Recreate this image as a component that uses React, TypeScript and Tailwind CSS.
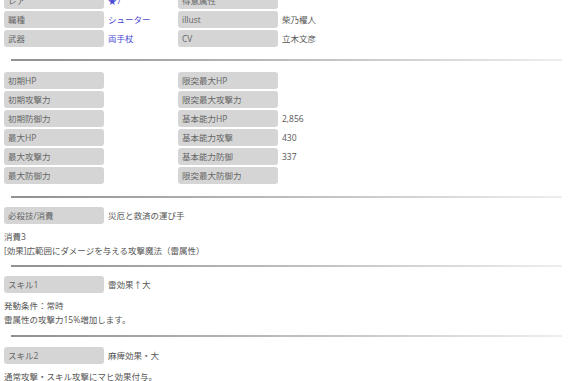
import React from "react";

const Label = ({ children }: { children: React.ReactNode }) => (
  <div className="h-[17px] rounded-[3px] bg-[#d5d5d5] pl-[4px] leading-[17px] text-[#666]">{children}</div>
);

const Val = ({ children, blue }: { children?: React.ReactNode; blue?: boolean }) => (
  <div className={`h-[17px] pl-[4px] leading-[17px] ${blue ? "text-[#4a4ad4]" : "text-[#555]"}`}>{children}</div>
);

const Divider = () => (
  <div className="ml-[11px] mr-[18px] h-[2px] bg-gradient-to-r from-[#909090] via-[#bdbdbd] to-[#eeeeee]" />
);

export default function App() {
  const stats: [string, string, string, string][] = [
    ["初期HP", "", "限突最大HP", ""],
    ["初期攻撃力", "", "限突最大攻撃力", ""],
    ["初期防御力", "", "基本能力HP", "2,856"],
    ["最大HP", "", "基本能力攻撃", "430"],
    ["最大攻撃力", "", "基本能力防御", "337"],
    ["最大防御力", "", "限突最大防御力", ""],
  ];
  return (
    <div
      className="h-[381px] w-[580px] overflow-hidden bg-white text-[8.5px] text-[#555]"
      style={{ fontFamily: '"Open Sans", "Noto Sans CJK JP", sans-serif' }}
    >
      <div className="-mt-[8px] grid grid-cols-[100px_74px_100px_1fr] gap-y-[2px] px-[4px]">
        <Label>レア</Label>
        <Val blue>★7</Val>
        <Label>得意属性</Label>
        <Val />
        <Label>職種</Label>
        <Val blue>シューター</Val>
        <Label>illust</Label>
        <Val>柴乃櫂人</Val>
        <Label>武器</Label>
        <Val blue>両手杖</Val>
        <Label>CV</Label>
        <Val>立木文彦</Val>
      </div>
      <div className="mt-[12px]">
        <Divider />
      </div>
      <div className="mt-[11px] grid grid-cols-[100px_74px_100px_1fr] gap-y-[2px] px-[4px]">
        {stats.map((r, i) => (
          <React.Fragment key={i}>
            <Label>{r[0]}</Label>
            <Val>{r[1]}</Val>
            <Label>{r[2]}</Label>
            <Val>{r[3]}</Val>
          </React.Fragment>
        ))}
      </div>
      <div className="mt-[12px]">
        <Divider />
      </div>
      <div className="mt-[9px] px-[4px]">
        <div className="grid grid-cols-[100px_1fr]">
          <Label>必殺技/消費</Label>
          <Val>災厄と救済の運び手</Val>
        </div>
        <div className="mt-[6px] leading-[14px]">
          <div>消費3</div>
          <div>[効果]広範囲にダメージを与える攻撃魔法（雷属性）</div>
        </div>
      </div>
      <div className="mt-[7px]">
        <Divider />
      </div>
      <div className="mt-[9px] px-[4px]">
        <div className="grid grid-cols-[100px_1fr]">
          <Label>スキル1</Label>
          <Val>雷効果↑大</Val>
        </div>
        <div className="mt-[6px] leading-[14px]">
          <div>発動条件：常時</div>
          <div>雷属性の攻撃力15%増加します。</div>
        </div>
      </div>
      <div className="mt-[8px]">
        <Divider />
      </div>
      <div className="mt-[10px] px-[4px]">
        <div className="grid grid-cols-[100px_1fr]">
          <Label>スキル2</Label>
          <Val>麻痺効果・大</Val>
        </div>
        <div className="mt-[6px] leading-[14px]">
          <div>通常攻撃・スキル攻撃にマヒ効果付与。</div>
        </div>
      </div>
    </div>
  );
}
